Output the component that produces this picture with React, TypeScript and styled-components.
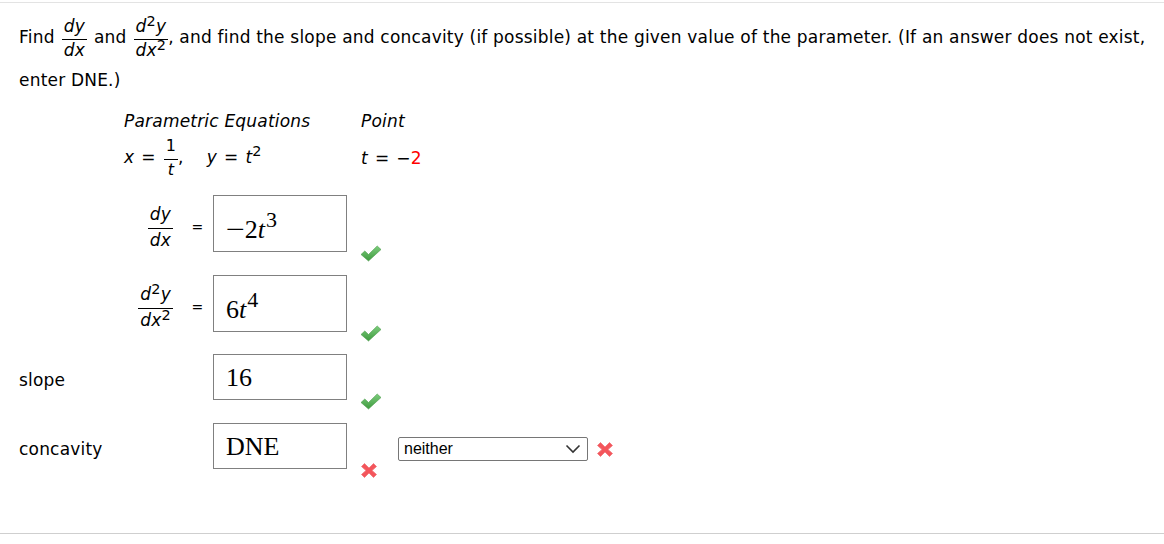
import React from "react";
import styled, { createGlobalStyle } from "styled-components";

const textColor = "#000";
const boxBorder = "#808080";

const GlobalStyle = createGlobalStyle`
  html, body {
    margin: 0;
    padding: 0;
    background: #fff;
  }
  body {
    font-family: "DejaVu Sans", Verdana, sans-serif;
    font-size: 17px;
    letter-spacing: 0.2px;
    color: ${textColor};
  }
`;

const Page = styled.div`
  width: 1164px;
  height: 544px;
  box-sizing: border-box;
  padding-top: 2px;
`;

const Panel = styled.div`
  border-top: 1px solid #e3e3e3;
  border-bottom: 1px solid #cfcfcf;
  height: 532px;
  box-sizing: border-box;
  padding: 13px 0 0 19px;
`;

const Prompt = styled.p`
  margin: 0;
  line-height: 42px;
  white-space: nowrap;
`;

const Frac = styled.span<{ $size?: number; $tight?: boolean }>`
  display: inline-flex;
  flex-direction: column;
  align-items: center;
  vertical-align: middle;
  font-size: ${(p) => p.$size ?? 17}px;
  line-height: 1.1;
  margin: 0 ${(p) => (p.$tight ? 0 : 7)}px 0 7px;
  font-style: italic;
`;

const Num = styled.span`
  padding: 0 2px 3px;
  border-bottom: 1px solid ${textColor};
  align-self: stretch;
  text-align: center;
`;

const Den = styled.span`
  padding-top: 1px;
`;

const Sup = styled.sup`
  font-size: 0.85em;
  font-style: normal;
  line-height: 0;
  vertical-align: 0.45em;
`;

const Table = styled.div`
  margin-top: 9px;
  display: flex;
  flex-direction: column;
`;

const Row = styled.div<{ $top: number; $h: number }>`
  display: grid;
  grid-template-columns: 105px 56px 33px 134px 51px auto;
  align-items: center;
  margin-top: ${(p) => p.$top}px;
  height: ${(p) => p.$h}px;
`;

const Label = styled.div`
  grid-column: 1;
  padding-top: 6px;
`;

const Heading = styled.div<{ $col: string; $indent?: number }>`
  grid-column: ${(p) => p.$col};
  font-style: italic;
  padding-left: ${(p) => p.$indent ?? 0}px;
  white-space: nowrap;
`;

const Equation = styled.div<{ $col: string; $indent?: number }>`
  grid-column: ${(p) => p.$col};
  padding-left: ${(p) => p.$indent ?? 0}px;
  white-space: nowrap;
`;

const Var = styled.i`
  font-style: italic;
`;

const Op = styled.span`
  margin: 0 7px;
`;

const Gap = styled.span`
  display: inline-block;
  width: 23px;
`;

const Red = styled.span`
  color: #ff0000;
`;

const SmallFrac = styled(Frac)`
  font-size: 16px;
  margin: 0 0 0 1px;
  font-style: normal;
  line-height: 1.15;
`;

const DerivCell = styled.div`
  grid-column: 2;
  display: flex;
  justify-content: flex-end;
  padding-right: 7px;
  padding-top: 9px;
`;

const DerivFrac = styled(Frac)`
  margin: 0;
  line-height: 1.25;
`;

const Equals = styled.div`
  grid-column: 3;
  text-align: center;
  font-size: 14px;
  padding-top: 7px;
  padding-left: 2px;
`;

const AnswerBox = styled.div<{ $pt: number }>`
  grid-column: 4;
  align-self: stretch;
  box-sizing: border-box;
  border: 1px solid ${boxBorder};
  padding: ${(p) => p.$pt}px 0 0 12px;
  font-family: "Liberation Serif", "Times New Roman", serif;
  font-size: 26px;
  letter-spacing: 0;
  line-height: 1;
  white-space: nowrap;
`;

const Minus = styled.span`
  display: inline-block;
  transform: scaleX(1.3);
  transform-origin: left center;
  margin-right: 4px;
`;

const MathVar = styled.i`
  font-style: italic;
`;

const MathSup = styled.sup`
  font-size: 22px;
  line-height: 0;
  vertical-align: 0.5em;
  margin-left: 1px;
`;

const Mark = styled.div`
  grid-column: 5;
  align-self: end;
  margin-bottom: -10px;
  padding-left: 13px;
  height: 17px;
`;

const SelectCell = styled.div`
  grid-column: 6;
  display: flex;
  align-items: center;
  gap: 8px;
  padding-top: 6px;
`;

const FakeSelect = styled.div`
  width: 190px;
  height: 24px;
  box-sizing: border-box;
  border: 1px solid #767676;
  border-radius: 2px;
  display: flex;
  align-items: center;
  justify-content: space-between;
  padding: 0 6px 0 5px;
  font-family: "Liberation Sans", Arial, sans-serif;
  font-size: 16px;
  letter-spacing: 0;
  color: #000;
  background: #fff;
`;

function Check() {
  return (
    <svg width="22" height="17" viewBox="0 0 22 17">
      <defs>
        <linearGradient id="ck" x1="0" y1="0" x2="0" y2="1">
          <stop offset="0" stopColor="#7ccd7c" />
          <stop offset="1" stopColor="#3f9a3f" />
        </linearGradient>
      </defs>
      <path
        d="M1 9.5 L4.8 6 L8.5 9.5 L17.2 1 L21 4.5 L8.5 16 Z"
        fill="url(#ck)"
        stroke="#4a9a4a"
        strokeWidth="0.6"
        strokeLinejoin="round"
      />
    </svg>
  );
}

function Cross() {
  return (
    <svg width="18" height="17" viewBox="0 0 18 17">
      <path
        d="M1.5 4.5 L4.5 1.5 L9 6 L13.5 1.5 L16.5 4.5 L12 8.5 L16.5 12.5 L13.5 15.5 L9 11 L4.5 15.5 L1.5 12.5 L6 8.5 Z"
        fill="#f4555b"
        stroke="#f07378"
        strokeWidth="0.8"
        strokeLinejoin="round"
      />
    </svg>
  );
}

function Chevron() {
  return (
    <svg width="16" height="10" viewBox="0 0 16 10">
      <path d="M1.5 1.5 L8 8 L14.5 1.5" fill="none" stroke="#333" strokeWidth="1.6" />
    </svg>
  );
}

export default function App() {
  return (
    <>
      <GlobalStyle />
      <Page>
        <Panel>
          <Prompt>
            Find
            <Frac>
              <Num>dy</Num>
              <Den>dx</Den>
            </Frac>
            and
            <Frac $tight>
              <Num>
                d<Sup>2</Sup>y
              </Num>
              <Den>
                dx<Sup>2</Sup>
              </Den>
            </Frac>
            , and find the slope and concavity (if possible) at the given value of the parameter. (If an answer does not exist,
            <br />
            enter DNE.)
          </Prompt>

          <Table>
            <Row $top={0} $h={22}>
              <Heading $col="2 / 5">Parametric Equations</Heading>
              <Heading $col="5 / 7" $indent={14}>
                Point
              </Heading>
            </Row>

            <Row $top={5} $h={40}>
              <Equation $col="2 / 5">
                <Var>x</Var>
                <Op>=</Op>
                <SmallFrac>
                  <Num>1</Num>
                  <Den>
                    <Var>t</Var>
                  </Den>
                </SmallFrac>
                ,<Gap />
                <Var>y</Var>
                <Op>=</Op>
                <Var>t</Var>
                <Sup>2</Sup>
              </Equation>
              <Equation $col="5 / 7" $indent={14}>
                <Var>t</Var>
                <Op>=</Op>
                −<Red>2</Red>
              </Equation>
            </Row>

            <Row $top={18} $h={56}>
              <DerivCell>
                <DerivFrac>
                  <Num>dy</Num>
                  <Den>dx</Den>
                </DerivFrac>
              </DerivCell>
              <Equals>=</Equals>
              <AnswerBox $pt={21}>
                <Minus>−</Minus>2<MathVar>t</MathVar>
                <MathSup>3</MathSup>
              </AnswerBox>
              <Mark>
                <Check />
              </Mark>
            </Row>

            <Row $top={24} $h={56}>
              <DerivCell>
                <DerivFrac>
                  <Num>
                    d<Sup>2</Sup>y
                  </Num>
                  <Den>
                    dx<Sup>2</Sup>
                  </Den>
                </DerivFrac>
              </DerivCell>
              <Equals>=</Equals>
              <AnswerBox $pt={21}>
                6<MathVar>t</MathVar>
                <MathSup>4</MathSup>
              </AnswerBox>
              <Mark>
                <Check />
              </Mark>
            </Row>

            <Row $top={23} $h={46}>
              <Label>slope</Label>
              <AnswerBox $pt={10}>16</AnswerBox>
              <Mark>
                <Check />
              </Mark>
            </Row>

            <Row $top={23} $h={46}>
              <Label>concavity</Label>
              <AnswerBox $pt={10}>DNE</AnswerBox>
              <Mark>
                <Cross />
              </Mark>
              <SelectCell>
                <FakeSelect>
                  neither
                  <Chevron />
                </FakeSelect>
                <Cross />
              </SelectCell>
            </Row>
          </Table>
        </Panel>
      </Page>
    </>
  );
}
